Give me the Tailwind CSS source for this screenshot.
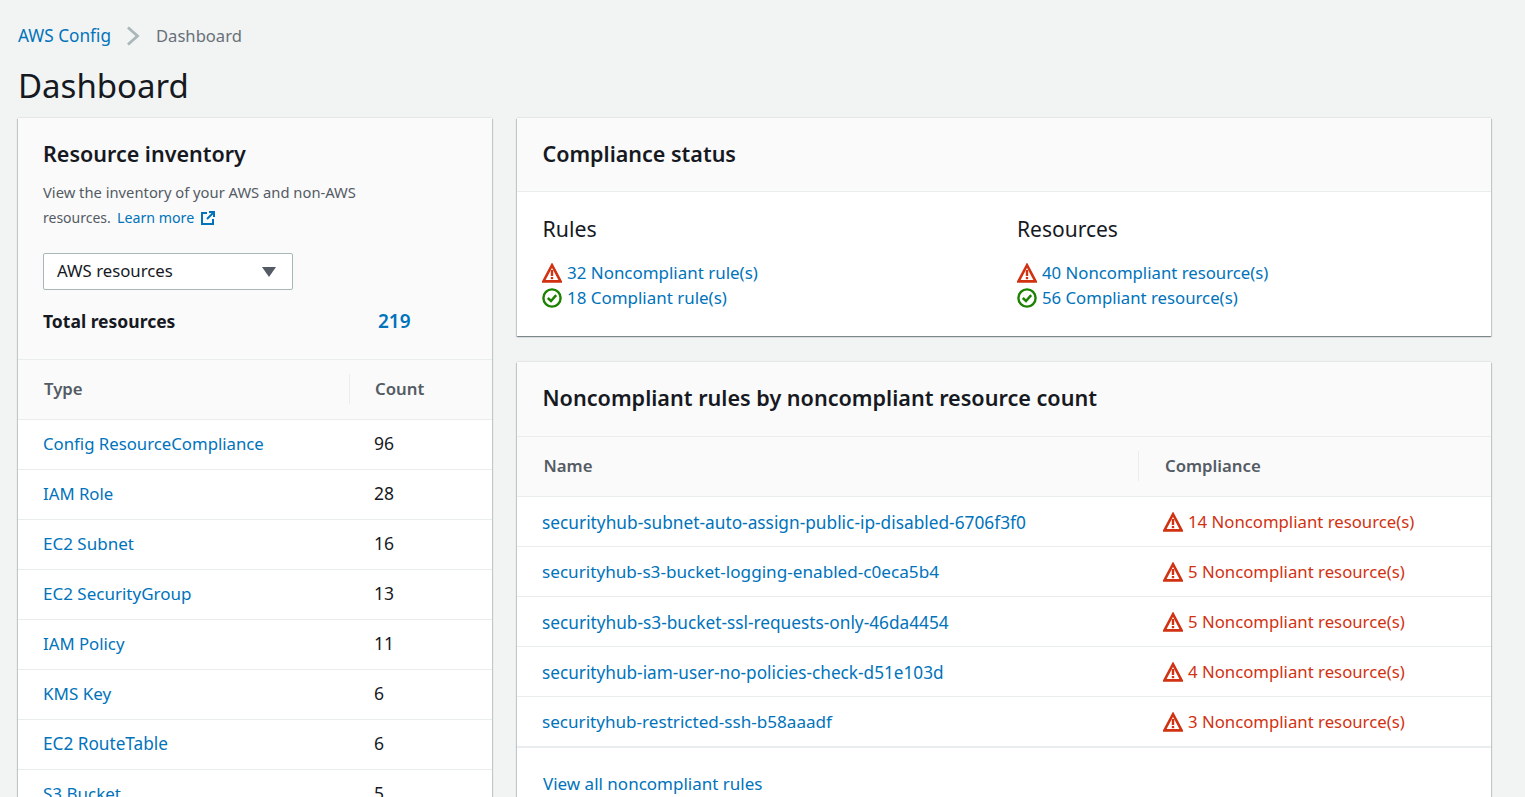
<!DOCTYPE html>
<html lang="en">
<head>
    <meta charset="UTF-8">
    <title>AWS Config Dashboard</title>
    <script src="https://cdn.jsdelivr.net/npm/@tailwindcss/browser@4"></script>
</head>
<body class="h-[797px] overflow-hidden bg-[#f2f3f3] font-['Noto_Sans',sans-serif] text-[16.75px] text-[#16191f]">
    <svg class="hidden">
        <symbol id="warn" viewBox="0 0 20 20">
            <path d="M10 2.2 L18.6 18.4 H1.4 Z" fill="#fff" stroke="#d13212" stroke-width="2.6" stroke-linejoin="miter"/>
            <rect x="8.8" y="7" width="2.4" height="6" fill="#d13212"/>
            <rect x="8.8" y="14" width="2.4" height="2.2" fill="#d13212"/>
        </symbol>
        <symbol id="ok" viewBox="0 0 20 20">
            <circle cx="10" cy="10" r="8.6" fill="#fff" stroke="#1d8102" stroke-width="2.4"/>
            <path d="M5.8 10 L9 13 L14.2 7.2" fill="none" stroke="#1d8102" stroke-width="2.5"/>
        </symbol>
    </svg>

    <div class="pl-[18px] pr-[34px]">
        <!-- Breadcrumb -->
        <div class="flex h-[71px] items-center leading-[24px]">
            <a class="text-[17.2px] text-[#0073bb]">AWS Config</a>
            <svg class="ml-[15px] mr-[16px] h-[20px] w-[14px]" viewBox="0 0 14 20"><path d="M2 1.5 L11.5 10 L2 18.5" fill="none" stroke="#aab7b8" stroke-width="2.8"/></svg>
            <span class="text-[16.6px] text-[#687078]">Dashboard</span>
        </div>
        <h1 class="h-[47px] text-[33px] leading-[30px] font-normal">Dashboard</h1>

        <div class="flex items-start gap-[25px]">
            <!-- Resource inventory -->
            <div class="h-[760px] w-[474px] shrink-0 bg-white shadow-[0_1px_1px_0_rgba(0,28,36,0.3),1px_1px_1px_0_rgba(0,28,36,0.15),-1px_1px_1px_0_rgba(0,28,36,0.15),0_-1px_1px_0_rgba(0,28,36,0.05)]">
                <div class="h-[242px] border-b border-[#eaeded] bg-[#fafafa] px-[25px]">
                    <h2 class="pt-[21px] text-[21.5px] leading-[30px] font-semibold">Resource inventory</h2>
                    <div class="mt-[11px] text-[14.75px] leading-[25px] text-[#545b64]">
                        <p>View the inventory of your AWS and non-AWS</p>
                        <p class="flex items-center">
                            <span class="w-[74px] text-[14px]">resources.</span>
                            <a class="text-[14.2px] text-[#0073bb]">Learn more</a>
                            <svg class="ml-[7px] h-[14px] w-[14px]" viewBox="0 0 14 14" fill="none" stroke="#0073bb" stroke-width="2"><path d="M6 2 H1 V13 H12 V8"/><path d="M8 1 H13 V6 M13 1 L6 8"/></svg>
                        </p>
                    </div>
                    <div class="mt-[23px] flex h-[37px] w-[250px] items-center justify-between rounded-[2px] border border-[#aab7b8] bg-white pl-[13px] pr-[16px]">
                        <span class="pb-[2px]">AWS resources</span>
                        <svg class="h-[10px] w-[14px]" viewBox="0 0 14 10"><path d="M0 0 H14 L7 10 Z" fill="#545b64"/></svg>
                    </div>
                    <div class="mt-[18px] flex items-center font-bold leading-[26px]">
                        <span class="w-[335px] text-[17.5px]">Total resources</span>
                        <span class="text-[19px] font-semibold text-[#0073bb]">219</span>
                    </div>
                </div>
                <div class="flex h-[60px] items-center border-b border-[#eaeded] bg-[#fafafa] pb-[2px] font-semibold text-[#545b64]">
                    <div class="w-[331px] pl-[26px]">Type</div>
                    <div class="flex h-[30px] items-center border-l border-[#eaeded] pl-[25px]">Count</div>
                </div>
                <div>
                    <div class="flex h-[50px] items-center border-b border-[#eaeded] pb-[2px] pl-[25px]"><a class="w-[331px] text-[#0073bb]">Config ResourceCompliance</a><span class="text-[17.5px]">96</span></div>
                    <div class="flex h-[50px] items-center border-b border-[#eaeded] pb-[2px] pl-[25px]"><a class="w-[331px] text-[#0073bb]">IAM Role</a><span class="text-[17.5px]">28</span></div>
                    <div class="flex h-[50px] items-center border-b border-[#eaeded] pb-[2px] pl-[25px]"><a class="w-[331px] text-[17px] text-[#0073bb]">EC2 Subnet</a><span class="text-[17.5px]">16</span></div>
                    <div class="flex h-[50px] items-center border-b border-[#eaeded] pb-[2px] pl-[25px]"><a class="w-[331px] text-[17px] text-[#0073bb]">EC2 SecurityGroup</a><span class="text-[17.5px]">13</span></div>
                    <div class="flex h-[50px] items-center border-b border-[#eaeded] pb-[2px] pl-[25px]"><a class="w-[331px] text-[#0073bb]">IAM Policy</a><span class="text-[17.5px]">11</span></div>
                    <div class="flex h-[50px] items-center border-b border-[#eaeded] pb-[2px] pl-[25px]"><a class="w-[331px] text-[17px] text-[#0073bb]">KMS Key</a><span class="text-[17.5px]">6</span></div>
                    <div class="flex h-[50px] items-center border-b border-[#eaeded] pb-[2px] pl-[25px]"><a class="w-[331px] text-[17.2px] text-[#0073bb]">EC2 RouteTable</a><span class="text-[17.5px]">6</span></div>
                    <div class="flex h-[50px] items-center border-b border-[#eaeded] pb-[2px] pl-[25px]"><a class="w-[331px] text-[17px] text-[#0073bb]">S3 Bucket</a><span class="text-[17.5px]">5</span></div>
                </div>
            </div>

            <div class="flex w-[974px] shrink-0 flex-col gap-[26px]">
                <!-- Compliance status -->
                <div class="h-[218px] bg-white shadow-[0_1px_1px_0_rgba(0,28,36,0.3),1px_1px_1px_0_rgba(0,28,36,0.15),-1px_1px_1px_0_rgba(0,28,36,0.15),0_-1px_1px_0_rgba(0,28,36,0.05)]">
                    <div class="h-[74px] border-b border-[#eaeded] bg-[#fafafa] px-[25.5px] pt-[21px]">
                        <h2 class="text-[21.5px] leading-[30px] font-semibold">Compliance status</h2>
                    </div>
                    <div class="flex px-[25px] pt-[21px]">
                        <div class="w-[475px]">
                            <h3 class="pl-[0.5px] text-[21.3px] leading-[32px]">Rules</h3>
                            <div class="mt-[15px] flex h-[25px] items-center gap-[5px] text-[16.95px] text-[#0073bb]"><svg class="h-[20px] w-[20px]"><use href="#warn"/></svg>32 Noncompliant rule(s)</div>
                            <div class="flex h-[25px] items-center gap-[5px] text-[16.95px] text-[#0073bb]"><svg class="h-[20px] w-[20px]"><use href="#ok"/></svg>18 Compliant rule(s)</div>
                        </div>
                        <div>
                            <h3 class="text-[21px] leading-[32px]">Resources</h3>
                            <div class="mt-[15px] flex h-[25px] items-center gap-[5px] text-[#0073bb]"><svg class="h-[20px] w-[20px]"><use href="#warn"/></svg>40 Noncompliant resource(s)</div>
                            <div class="flex h-[25px] items-center gap-[5px] text-[#0073bb]"><svg class="h-[20px] w-[20px]"><use href="#ok"/></svg>56 Compliant resource(s)</div>
                        </div>
                    </div>
                </div>

                <!-- Noncompliant rules -->
                <div class="h-[500px] bg-white shadow-[0_1px_1px_0_rgba(0,28,36,0.3),1px_1px_1px_0_rgba(0,28,36,0.15),-1px_1px_1px_0_rgba(0,28,36,0.15),0_-1px_1px_0_rgba(0,28,36,0.05)]">
                    <div class="h-[75px] border-b border-[#eaeded] bg-[#fafafa] px-[25.5px] pt-[21px]">
                        <h2 class="text-[21.6px] leading-[30px] font-semibold">Noncompliant rules by noncompliant resource count</h2>
                    </div>
                    <div class="flex h-[60px] items-center border-b border-[#eaeded] bg-[#fafafa] pb-[2px] font-semibold text-[#545b64]">
                        <div class="w-[621px] pl-[26.5px]">Name</div>
                        <div class="flex h-[30px] items-center border-l border-[#eaeded] pl-[26px]">Compliance</div>
                    </div>
                    <div class="flex h-[50px] items-center border-b border-[#eaeded] pl-[25px]"><a class="w-[621px] pt-[2px] text-[17.3px] text-[#0073bb]">securityhub-subnet-auto-assign-public-ip-disabled-6706f3f0</a><span class="flex items-center gap-[5px] text-[#d13212]"><svg class="h-[20px] w-[20px]"><use href="#warn"/></svg>14 Noncompliant resource(s)</span></div>
                    <div class="flex h-[50px] items-center border-b border-[#eaeded] pl-[25px]"><a class="w-[621px] text-[17.15px] text-[#0073bb]">securityhub-s3-bucket-logging-enabled-c0eca5b4</a><span class="flex items-center gap-[5px] text-[#d13212]"><svg class="h-[20px] w-[20px]"><use href="#warn"/></svg>5 Noncompliant resource(s)</span></div>
                    <div class="flex h-[50px] items-center border-b border-[#eaeded] pl-[25px]"><a class="w-[621px] pt-[2px] text-[17.25px] text-[#0073bb]">securityhub-s3-bucket-ssl-requests-only-46da4454</a><span class="flex items-center gap-[5px] text-[#d13212]"><svg class="h-[20px] w-[20px]"><use href="#warn"/></svg>5 Noncompliant resource(s)</span></div>
                    <div class="flex h-[50px] items-center border-b border-[#eaeded] pl-[25px]"><a class="w-[621px] pt-[2px] text-[17.2px] text-[#0073bb]">securityhub-iam-user-no-policies-check-d51e103d</a><span class="flex items-center gap-[5px] text-[#d13212]"><svg class="h-[20px] w-[20px]"><use href="#warn"/></svg>4 Noncompliant resource(s)</span></div>
                    <div class="flex h-[51px] items-center border-b-2 border-[#eaeded] pl-[25px]"><a class="w-[621px] text-[17.1px] text-[#0073bb]">securityhub-restricted-ssh-b58aaadf</a><span class="flex items-center gap-[5px] text-[#d13212]"><svg class="h-[20px] w-[20px]"><use href="#warn"/></svg>3 Noncompliant resource(s)</span></div>
                    <div class="pl-[26px] pt-[24px] leading-[24px]"><a class="text-[17px] text-[#0073bb]">View all noncompliant rules</a></div>
                </div>
            </div>
        </div>
    </div>
</body>
</html>
